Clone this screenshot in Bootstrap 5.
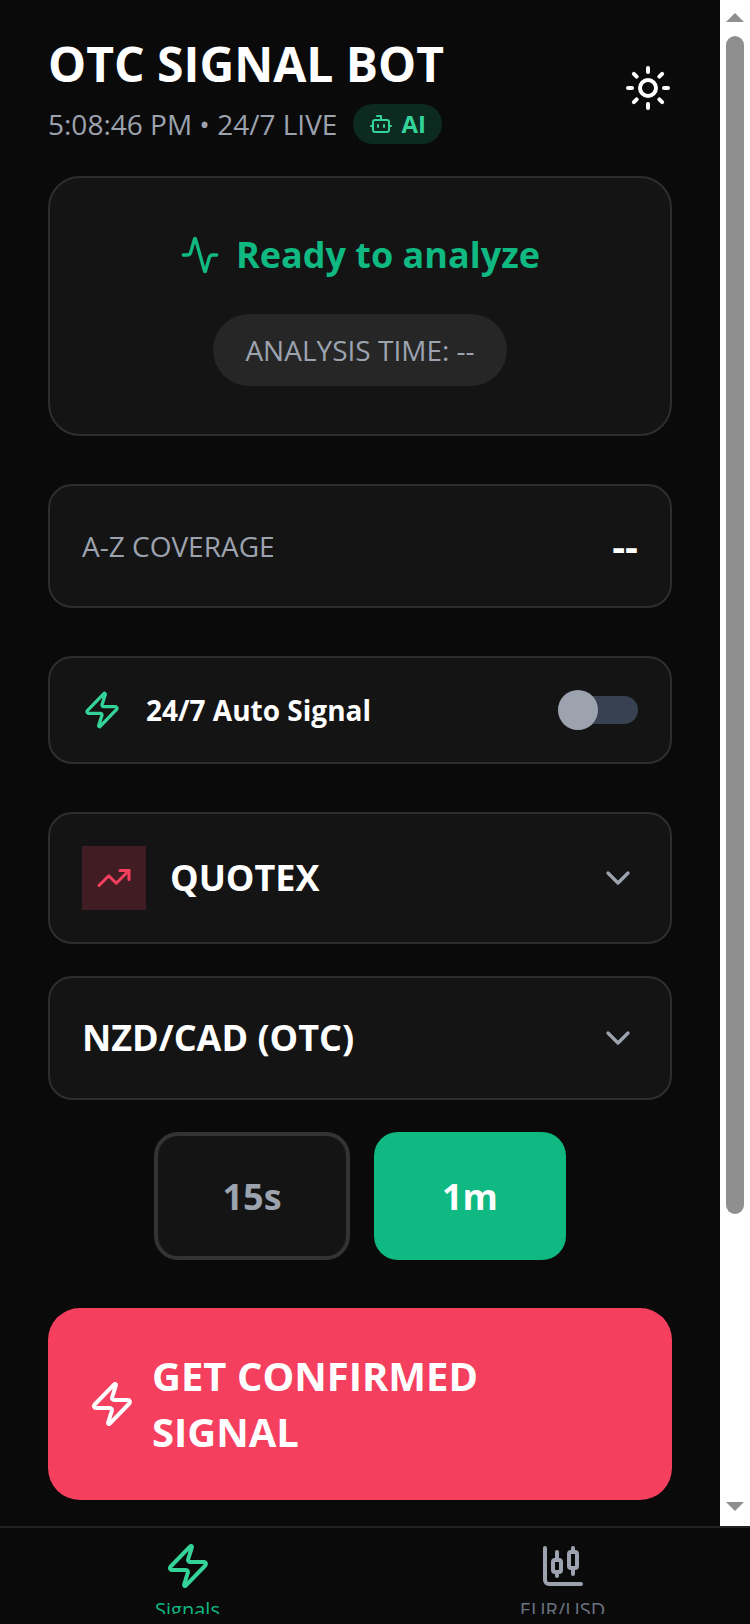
<!DOCTYPE html>
<html lang="en">
<head>
  <meta charset="UTF-8" />
  <title>OTC Signal Bot</title>
  <link rel="stylesheet" href="https://cdn.jsdelivr.net/npm/bootstrap@5.3.0/dist/css/bootstrap.min.css" />
  <style>
    html, body { height: 1624px; overflow: hidden; }
    body { background: #0a0a0a; font-family: "Open Sans", sans-serif; color: #fff; }
    svg { fill: none; stroke: currentColor; stroke-width: 2; stroke-linecap: round; stroke-linejoin: round; flex-shrink: 0; display: block; }
    .app-top { height: 1526px; }
    .app-main { width: 720px; padding: 36px 48px 0; overflow: hidden; }
    .app-title { font-size: 48px; line-height: 56px; font-weight: 700; margin: 0; }
    .app-sub { font-size: 28px; line-height: 40px; color: #9ca3af; margin-top: 12px; }
    .theme-ico { margin-bottom: 4px; }
    .ai-tag { height: 40px; padding: 0 16px; margin-left: 16px; border-radius: 20px; background: #0c2a20; color: #34d399; font-size: 24px; font-weight: 700; gap: 8px; }
    .panel { background: #141414; border: 2px solid #2e2e2e; border-radius: 24px; padding: 32px; }
    .status-panel { height: 260px; margin-top: 32px; border-radius: 32px; padding-top: 57px; }
    .status-text { font-size: 36px; line-height: 40px; font-weight: 700; color: #10b981; gap: 16px; }
    .time-pill { height: 72px; padding: 0 32px; margin-top: 39px; border-radius: 36px; background: #262626; color: #9ca3af; font-size: 28px; }
    .coverage { height: 124px; margin-top: 48px; }
    .cov-label { font-size: 28px; color: #9ca3af; }
    .cov-val { font-size: 40px; font-weight: 700; }
    .auto-row { height: 108px; margin-top: 48px; }
    .auto-label { font-size: 28px; font-weight: 700; margin-left: 24px; }
    .zap-green { color: #34d399; }
    .toggle-track { width: 80px; height: 28px; border-radius: 14px; background: #374151; position: relative; }
    .toggle-knob { position: absolute; left: 0; top: -6px; width: 40px; height: 40px; border-radius: 50%; background: #9ca3af; }
    .select-row { margin-top: 48px; height: 132px; }
    .select-row.pair { margin-top: 32px; height: 124px; }
    .select-text { font-size: 36px; font-weight: 700; }
    .broker-ico { width: 64px; height: 64px; background: #411d23; color: #f43f5e; margin-right: 24px; }
    .chev { color: #9ca3af; }
    .time-btns { margin-top: 32px; gap: 24px; }
    .time-btn { height: 128px; padding-top: 2px; font-size: 36px; font-weight: 700; border-radius: 24px; }
    .time-off { width: 196px; background: #141414; border: 4px solid #333; color: #9ca3af; }
    .time-on { width: 192px; background: #10b981; color: #fff; }
    .signal-btn { height: 192px; margin-top: 48px; padding: 0 40px; border-radius: 32px; background: #f43f5e; gap: 16px; font-size: 40px; line-height: 56px; font-weight: 700; }
    .fake-scroll { width: 30px; background: #fff; padding: 0 6px; }
    .scroll-up { width: 0; height: 0; margin-top: 13px; border-left: 9px solid transparent; border-right: 9px solid transparent; border-bottom: 9px solid #8f8f8f; }
    .scroll-thumb { height: 1178px; margin-top: 14px; border-radius: 9px; background: #8f8f8f; }
    .scroll-down { width: 0; height: 0; margin-top: 288px; border-left: 9px solid transparent; border-right: 9px solid transparent; border-top: 9px solid #8f8f8f; }
    .tabbar { height: 88px; border-top: 2px solid #222; overflow: hidden; }
    .tab-item { width: 375px; padding-top: 14px; font-size: 20px; line-height: 32px; color: #6b7280; gap: 4px; }
    .tab-item.on { color: #10b981; }
    .tab-icon-off { color: #9ca3af; }
  </style>
</head>
<body>
  <div class="app-top d-flex">
    <div class="app-main flex-grow-0">
      <!-- header -->
      <div class="d-flex justify-content-between align-items-center">
        <div>
          <h1 class="app-title">OTC SIGNAL BOT</h1>
          <div class="app-sub d-flex align-items-center">
            <span>5:08:46 PM • 24/7 LIVE</span>
            <span class="ai-tag d-inline-flex align-items-center">
              <svg width="24" height="24" viewBox="0 0 24 24"><path d="M12 8V4H8"/><rect width="16" height="12" x="4" y="8" rx="2"/><path d="M2 14h2"/><path d="M20 14h2"/><path d="M15 13v2"/><path d="M9 13v2"/></svg>
              AI
            </span>
          </div>
        </div>
        <svg class="theme-ico" width="48" height="48" viewBox="0 0 24 24"><circle cx="12" cy="12" r="4"/><path d="M12 2v2"/><path d="M12 20v2"/><path d="m4.93 4.93 1.41 1.41"/><path d="m17.66 17.66 1.41 1.41"/><path d="M2 12h2"/><path d="M20 12h2"/><path d="m6.34 17.66-1.41 1.41"/><path d="m19.07 4.93-1.41 1.41"/></svg>
      </div>

      <!-- status -->
      <div class="panel status-panel d-flex flex-column align-items-center">
        <div class="status-text d-flex align-items-center">
          <svg width="40" height="40" viewBox="0 0 24 24"><path d="M22 12h-2.48a2 2 0 0 0-1.93 1.46l-2.35 8.36a.25.25 0 0 1-.48 0L9.24 2.18a.25.25 0 0 0-.48 0l-2.35 8.36A2 2 0 0 1 4.49 12H2"/></svg>
          Ready to analyze
        </div>
        <div class="time-pill d-flex align-items-center">ANALYSIS TIME: --</div>
      </div>

      <div class="panel coverage d-flex justify-content-between align-items-center">
        <span class="cov-label">A-Z COVERAGE</span>
        <span class="cov-val">--</span>
      </div>

      <div class="panel auto-row d-flex justify-content-between align-items-center">
        <div class="d-flex align-items-center">
          <svg class="zap-green" width="40" height="40" viewBox="0 0 24 24"><path d="M4 14a1 1 0 0 1-.78-1.63l9.9-10.2a.5.5 0 0 1 .86.46l-1.92 6.02A1 1 0 0 0 13 10h7a1 1 0 0 1 .78 1.63l-9.9 10.2a.5.5 0 0 1-.86-.46l1.92-6.02A1 1 0 0 0 11 14z"/></svg>
          <span class="auto-label">24/7 Auto Signal</span>
        </div>
        <div class="toggle-track"><div class="toggle-knob"></div></div>
      </div>

      <div class="panel select-row d-flex justify-content-between align-items-center">
        <div class="d-flex align-items-center">
          <div class="broker-ico d-flex align-items-center justify-content-center">
            <svg width="36" height="36" viewBox="0 0 24 24"><polyline points="22 7 13.5 15.5 8.5 10.5 2 17"/><polyline points="16 7 22 7 22 13"/></svg>
          </div>
          <span class="select-text">QUOTEX</span>
        </div>
        <svg class="chev" width="40" height="40" viewBox="0 0 24 24"><path d="m6 9 6 6 6-6"/></svg>
      </div>

      <div class="panel select-row pair d-flex justify-content-between align-items-center">
        <span class="select-text">NZD/CAD (OTC)</span>
        <svg class="chev" width="40" height="40" viewBox="0 0 24 24"><path d="m6 9 6 6 6-6"/></svg>
      </div>

      <div class="time-btns d-flex justify-content-center">
        <div class="time-btn time-off d-flex align-items-center justify-content-center">15s</div>
        <div class="time-btn time-on d-flex align-items-center justify-content-center">1m</div>
      </div>

      <div class="signal-btn d-flex align-items-center">
        <svg width="48" height="48" viewBox="0 0 24 24"><path d="M4 14a1 1 0 0 1-.78-1.63l9.9-10.2a.5.5 0 0 1 .86.46l-1.92 6.02A1 1 0 0 0 13 10h7a1 1 0 0 1 .78 1.63l-9.9 10.2a.5.5 0 0 1-.86-.46l1.92-6.02A1 1 0 0 0 11 14z"/></svg>
        <span>GET CONFIRMED<br>SIGNAL</span>
      </div>
    </div>

    <!-- scrollbar as it appears in the shot -->
    <div class="fake-scroll">
      <div class="scroll-up"></div>
      <div class="scroll-thumb"></div>
      <div class="scroll-down"></div>
    </div>
  </div>

  <nav class="tabbar d-flex">
    <div class="tab-item on d-flex flex-column align-items-center">
      <svg class="zap-green" width="48" height="48" viewBox="0 0 24 24"><path d="M4 14a1 1 0 0 1-.78-1.63l9.9-10.2a.5.5 0 0 1 .86.46l-1.92 6.02A1 1 0 0 0 13 10h7a1 1 0 0 1 .78 1.63l-9.9 10.2a.5.5 0 0 1-.86-.46l1.92-6.02A1 1 0 0 0 11 14z"/></svg>
      <span>Signals</span>
    </div>
    <div class="tab-item d-flex flex-column align-items-center">
      <svg class="tab-icon-off" width="48" height="48" viewBox="0 0 24 24"><path d="M9 5v4"/><rect width="4" height="6" x="7" y="9" rx="1"/><path d="M9 15v2"/><path d="M17 3v2"/><rect width="4" height="8" x="15" y="5" rx="1"/><path d="M17 13v3"/><path d="M3 3v16a2 2 0 0 0 2 2h16"/></svg>
      <span>EUR/USD</span>
    </div>
  </nav>

  <script src="https://cdn.jsdelivr.net/npm/bootstrap@5.3.0/dist/js/bootstrap.bundle.min.js"></script>
</body>
</html>
